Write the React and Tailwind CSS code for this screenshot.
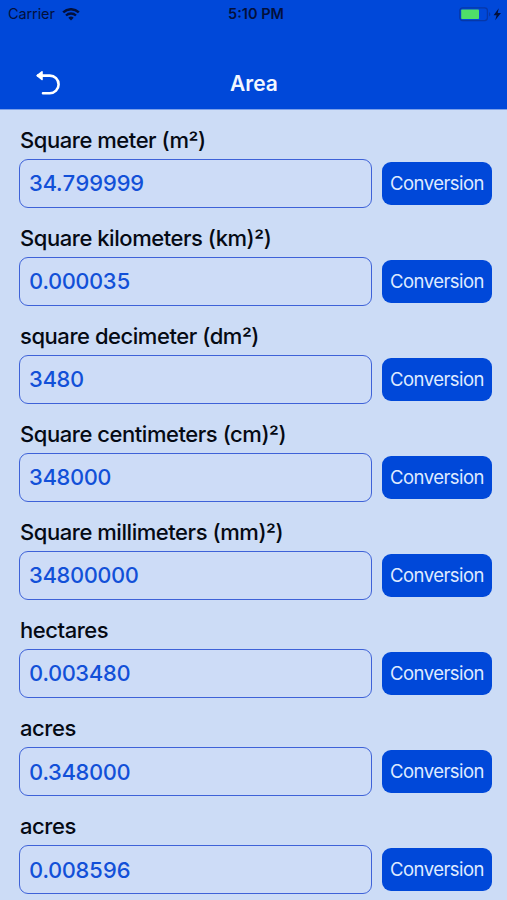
import { useState } from "react";

const UNITS = [
  { id: "m2", label: "Square meter (m²)", value: "34.799999" },
  { id: "km2", label: "Square kilometers (km)²)", value: "0.000035" },
  { id: "dm2", label: "square decimeter (dm²)", value: "3480" },
  { id: "cm2", label: "Square centimeters (cm)²)", value: "348000" },
  { id: "mm2", label: "Square millimeters (mm)²)", value: "34800000" },
  { id: "ha", label: "hectares", value: "0.003480" },
  { id: "are", label: "acres", value: "0.348000" },
  { id: "acre", label: "acres", value: "0.008596" },
];

function WifiIcon() {
  return (
    <svg width="18" height="13" viewBox="0 0 18 13" fill="none" stroke="currentColor">
      <path d="M1.2 4.4a11.2 11.2 0 0 1 15.6 0" strokeWidth="2.5" />
      <path d="M4 7.5a7.2 7.2 0 0 1 10 0" strokeWidth="2.3" />
      <path d="M9 12.6 6.3 9.8a3.9 3.9 0 0 1 5.4 0z" fill="currentColor" stroke="none" />
    </svg>
  );
}

function BatteryIcon() {
  return (
    <svg width="44" height="15" viewBox="0 0 44 15">
      <rect x="0.8" y="0.8" width="27.6" height="12.8" rx="2.8" fill="none" stroke="#0637a8" strokeWidth="1.3" />
      <rect x="2.2" y="2.4" width="17.8" height="9.6" rx="0.8" fill="#4fdd68" />
      <path d="M30 5c1.8.7 1.8 3.7 0 4.4z" fill="#0637a8" />
      <path d="M39.8 1.2 34.6 8.2h3L36.2 13.2l5.8-7.2h-3.3z" fill="#03103c" />
    </svg>
  );
}

function BackIcon() {
  return (
    <svg width="26" height="26" viewBox="0 0 26 26" fill="none" stroke="#fff" strokeWidth="2.6" strokeLinecap="round" strokeLinejoin="round">
      <path d="M3 5.6h11.8a8.8 8.8 0 0 1 0 17.6H8" />
      <path d="M7 1.8 2.2 5.6 7 9.4z" fill="#fff" strokeWidth="1.6" />
    </svg>
  );
}

function UnitLabel({ text }) {
  const [before, after] = text.split("²");
  if (after === undefined) return text;

  return (
    <>
      {before}
      <span className="align-[-2px] leading-none">²</span>
      {after}
    </>
  );
}

function UnitRow({ label, value, onChange }) {
  return (
    <div className="h-[98.1px] shrink-0 pl-[19px] pr-[15px] pt-[17px]">
      <label className="block h-8 whitespace-nowrap pl-px text-[22px] font-[450] leading-[27px] tracking-[-0.45px] text-[#050a14]">
        <UnitLabel text={label} />
      </label>
      <div className="flex items-center gap-[10px]">
        <input
          value={value}
          onChange={e => onChange(e.target.value)}
          className="h-[49px] w-[353px] rounded-[9px] border border-[#3e62d8] bg-[#cddcf7] px-[9px] text-[22px] font-[450] tabular-nums tracking-[-0.58px] text-[#1250d8] outline-none"
        />
        <button className="h-[43px] w-[110px] rounded-[9px] bg-[#0048d9] pt-px text-[18.5px] tracking-[-0.55px] text-[#dfeaff]">
          Conversion
        </button>
      </div>
    </div>
  );
}

export default function App() {
  const [units, setUnits] = useState(UNITS);

  function updateUnit(id, value) {
    setUnits(units.map(u => (u.id === id ? { ...u, value } : u)));
  }

  return (
    <div className="flex h-[900px] w-[507px] flex-col overflow-hidden bg-[#ccdcf6] font-[Inter,sans-serif]">
      {/* Header */}
      <header className="h-[109.5px] shrink-0 border-b border-[#7ba0ea] bg-[#0048d9]">
        <div className="flex h-7 items-center justify-between pl-2 pr-1 text-[#03103c]">
          <div className="flex w-[160px] items-center gap-[7px]">
            <span className="text-[14.5px] tracking-[-0.1px]">Carrier</span>
            <WifiIcon />
          </div>
          <span className="pl-px text-[14.5px] font-semibold">5:10 PM</span>
          <div className="flex w-[160px] justify-end">
            <BatteryIcon />
          </div>
        </div>
        <div className="grid h-[81px] grid-cols-3 items-center pt-[29px]">
          <button className="w-fit pl-[35px]">
            <BackIcon />
          </button>
          <h1 className="pl-px pt-px text-center text-[21px] font-semibold text-[#f2f7ff]">Area</h1>
        </div>
      </header>

      {/* Units */}
      <main className="flex flex-col">
        {units.map(u => (
          <UnitRow
            key={u.id}
            label={u.label}
            value={u.value}
            onChange={value => updateUnit(u.id, value)}
          />
        ))}
      </main>
    </div>
  );
}
